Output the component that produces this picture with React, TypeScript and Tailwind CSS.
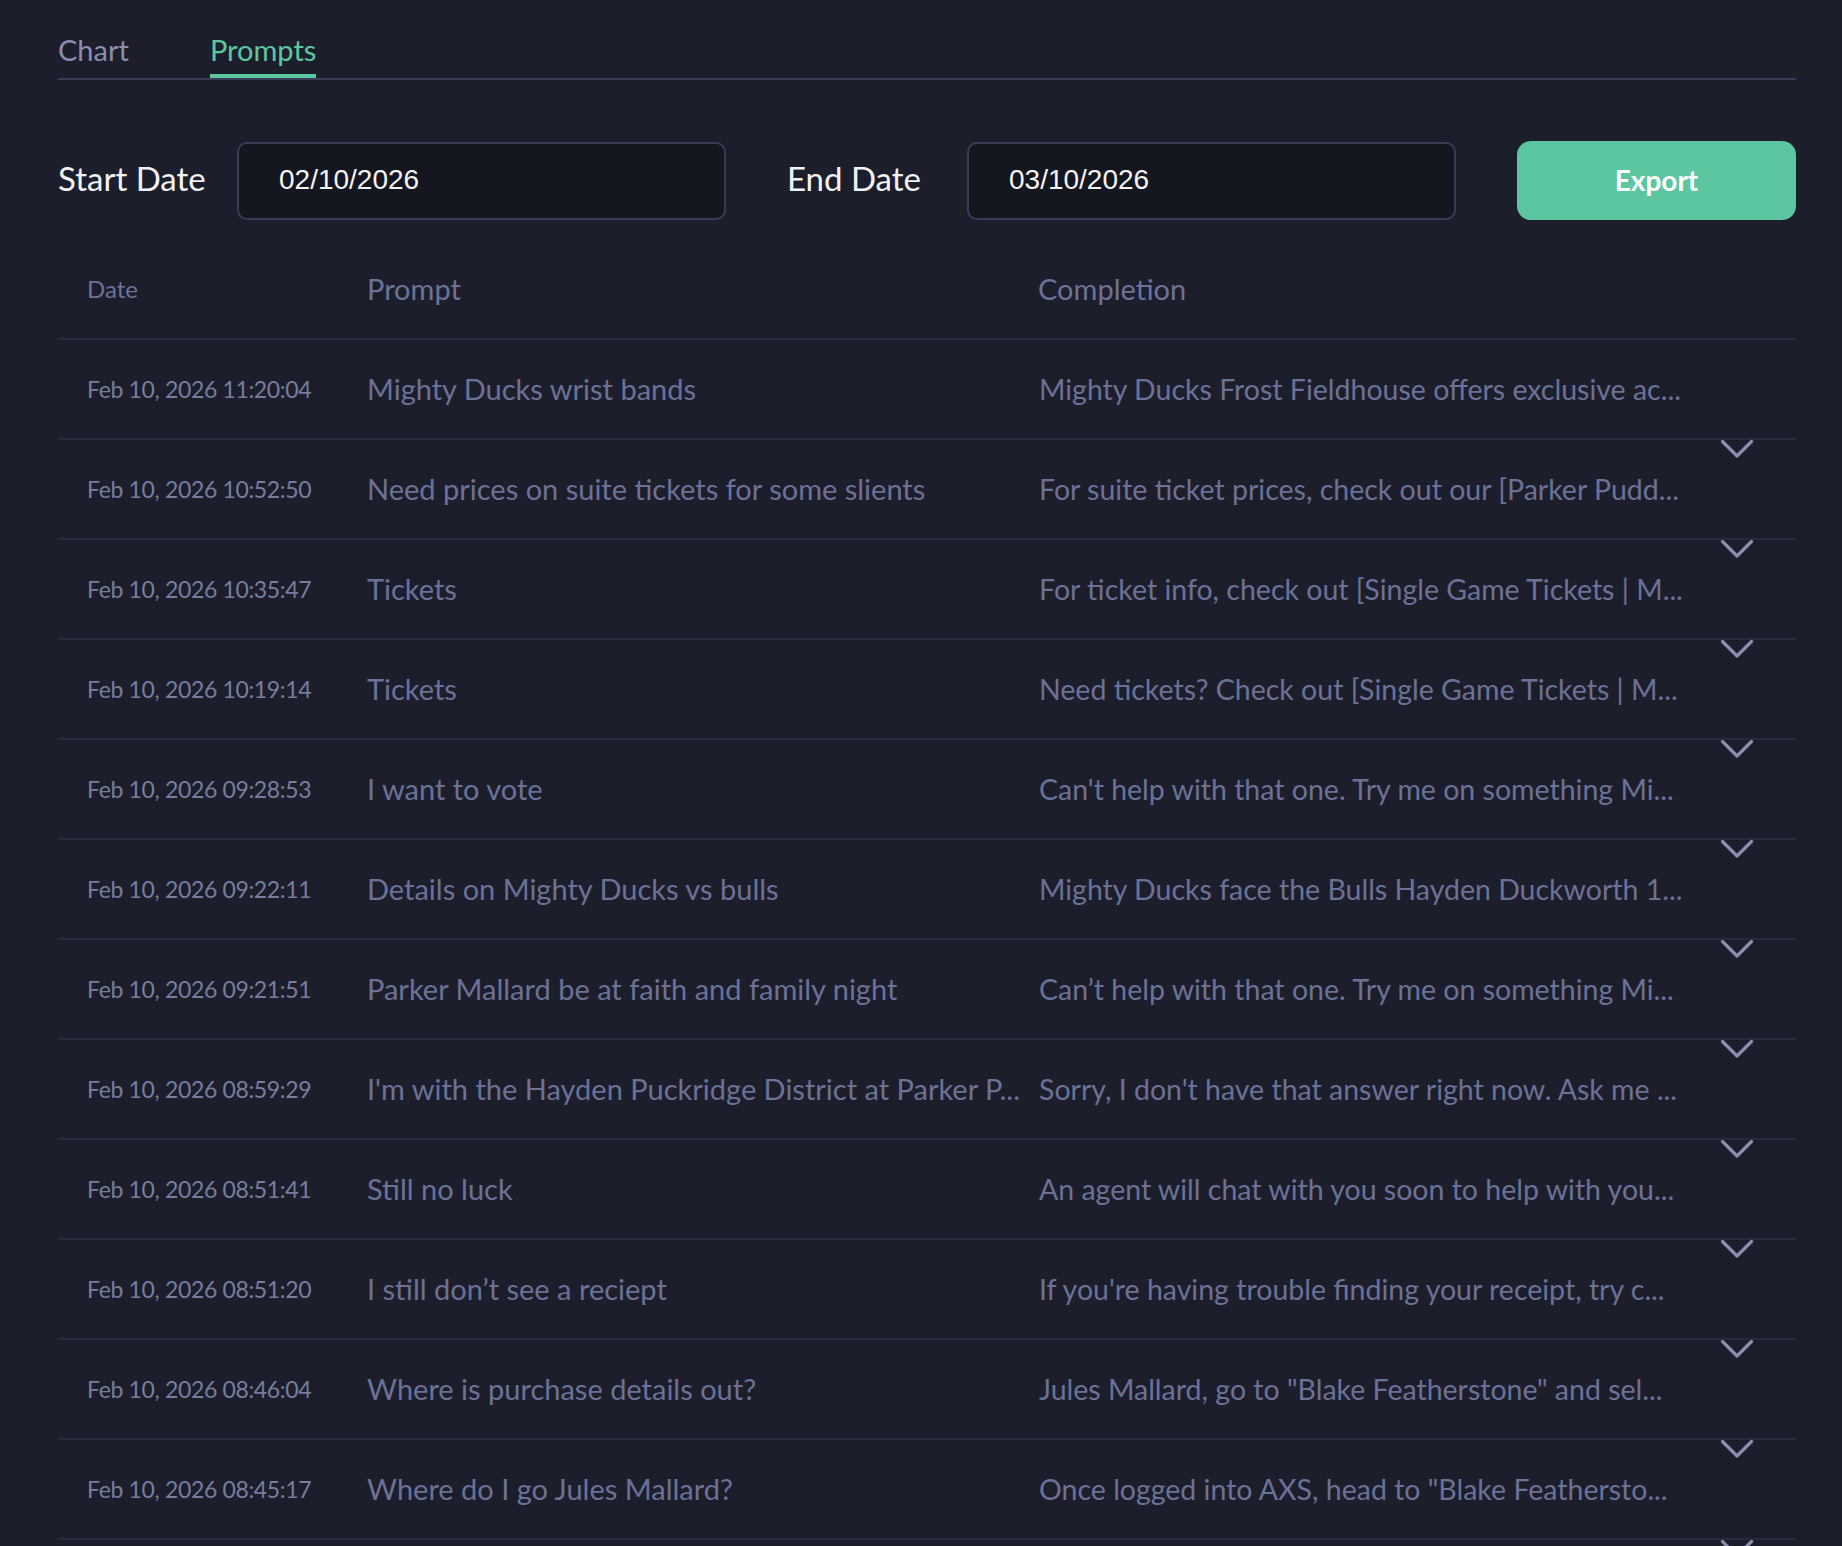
import React from "react";

const rows: [string, string, string][] = [
  ["Feb 10, 2026 11:20:04", "Mighty Ducks wrist bands", "Mighty Ducks Frost Fieldhouse offers exclusive ac..."],
  ["Feb 10, 2026 10:52:50", "Need prices on suite tickets for some slients", "For suite ticket prices, check out our [Parker Pudd..."],
  ["Feb 10, 2026 10:35:47", "Tickets", "For ticket info, check out [Single Game Tickets | M..."],
  ["Feb 10, 2026 10:19:14", "Tickets", "Need tickets? Check out [Single Game Tickets | M..."],
  ["Feb 10, 2026 09:28:53", "I want to vote", "Can't help with that one. Try me on something Mi..."],
  ["Feb 10, 2026 09:22:11", "Details on Mighty Ducks vs bulls", "Mighty Ducks face the Bulls Hayden Duckworth 1..."],
  ["Feb 10, 2026 09:21:51", "Parker Mallard be at faith and family night", "Can\u2019t help with that one. Try me on something Mi..."],
  ["Feb 10, 2026 08:59:29", "I'm with the Hayden Puckridge District at Parker P...", "Sorry, I don't have that answer right now. Ask me ..."],
  ["Feb 10, 2026 08:51:41", "Still no luck", "An agent will chat with you soon to help with you..."],
  ["Feb 10, 2026 08:51:20", "I still don\u2019t see a reciept", "If you're having trouble finding your receipt, try c..."],
  ["Feb 10, 2026 08:46:04", "Where is purchase details out?", "Jules Mallard, go to \"Blake Featherstone\" and sel..."],
  ["Feb 10, 2026 08:45:17", "Where do I go Jules Mallard?", "Once logged into AXS, head to \"Blake Feathersto..."],
];

function Chevron() {
  return (
    <svg width="34" height="21" viewBox="0 0 34 21" fill="none">
      <path d="M2.5 2.5 L17 17 L31.5 2.5" stroke="#8a8eb0" strokeWidth="3.2" strokeLinecap="round" strokeLinejoin="round" />
    </svg>
  );
}

export default function App() {
  return (
    <div className="h-[1546px] overflow-hidden bg-[#1c1f2b] font-['Lato',sans-serif]">
      <div className="pl-[58px] pr-[46px] pt-[33px]">
        {/* Tabs */}
        <div className="flex gap-[81px] border-b-2 border-[#3a3d57]">
          <div className="pb-[8px] border-b-4 border-transparent text-[29px] leading-[33px] text-[#8a8daf]">Chart</div>
          <div className="pb-[8px] border-b-4 border-[#5cc6a0] text-[29px] leading-[33px] text-[#5cc6a0]">Prompts</div>
        </div>

        {/* Filters */}
        <div className="mt-[61px] flex items-center">
          <div className="w-[179px] shrink-0 pb-[3px] text-[33px] text-[#f1f2f6]">Start Date</div>
          <input
            readOnly
            value="02/10/2026"
            className="h-[78px] w-[489px] shrink-0 rounded-[10px] border-2 border-[#393c56] bg-[#141620] pl-[40px] pb-[2px] font-['Liberation_Sans',sans-serif] text-[28px] text-[#f4f4f6] outline-none"
          />
          <div className="ml-[61px] w-[180px] shrink-0 pb-[3px] text-[33px] text-[#f1f2f6]">End Date</div>
          <input
            readOnly
            value="03/10/2026"
            className="h-[78px] w-[489px] shrink-0 rounded-[10px] border-2 border-[#393c56] bg-[#141620] pl-[40px] pb-[2px] font-['Liberation_Sans',sans-serif] text-[28px] text-[#f4f4f6] outline-none"
          />
          <button className="ml-[61px] h-[79px] flex-1 rounded-[14px] bg-[#5cc6a0] pb-[2px] text-[28px] font-bold text-white">
            Export
          </button>
        </div>

        {/* Table */}
        <div className="mt-[19px]">
          <div className="flex h-[101px] items-center border-b-2 border-[#282b3c] text-[#6c7298]">
            <div className="w-[309px] pl-[29px] text-[24px]">Date</div>
            <div className="w-[671px] text-[29px]">Prompt</div>
            <div className="text-[29px]">Completion</div>
          </div>
          {rows.map((r, i) => (
            <div key={i} className="relative flex h-[100px] items-center border-b-2 border-[#282b3c]">
              <div className="w-[309px] shrink-0 pl-[29px] text-[23px] tracking-[-0.35px] text-[#787d9e] whitespace-nowrap">{r[0]}</div>
              <div className="w-[671px] shrink-0 pr-[16px] text-[29px] text-[#6c7197] whitespace-nowrap overflow-hidden">{r[1]}</div>
              <div className="w-[660px] shrink-0 pl-[1px] text-[28.5px] text-[#6c7197] whitespace-nowrap overflow-hidden">{r[2]}</div>
              <div className="absolute right-[42px] top-full mt-[1px]">
                <Chevron />
              </div>
            </div>
          ))}
        </div>
      </div>
    </div>
  );
}
